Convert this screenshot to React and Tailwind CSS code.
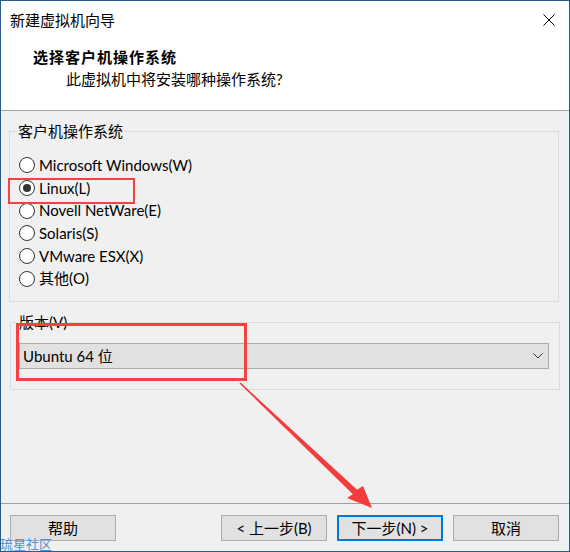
const FONT = { fontFamily: '"Lato", "Noto Sans CJK SC", sans-serif' }

const OPTIONS = [
  { label: 'Microsoft Windows(W)', checked: false },
  { label: 'Linux(L)', checked: true },
  { label: 'Novell NetWare(E)', checked: false },
  { label: 'Solaris(S)', checked: false },
  { label: 'VMware ESX(X)', checked: false },
  { label: '其他(O)', checked: false },
]

function Radio({ label, checked }) {
  return (
    <label className="ml-[3px] flex h-[22.7px] items-center gap-[4px] text-[15px] leading-none text-black">
      <span className="flex h-[16px] w-[16px] shrink-0 items-center justify-center rounded-full border border-[#333333] bg-white">
        {checked && <span className="h-[8px] w-[8px] rounded-full bg-[#333333]" />}
      </span>
      <span>{label}</span>
    </label>
  )
}

function Button({ children, primary }) {
  return (
    <button
      className={
        'flex h-[26px] w-[106px] items-center justify-center bg-[#e1e1e1] text-[15px] leading-none text-black ' +
        (primary ? 'border-2 border-[#0078d7]' : 'border border-[#adadad]')
      }
    >
      {children}
    </button>
  )
}

export default function App() {
  return (
    <div
      className="relative flex h-[552px] w-[570px] flex-col overflow-hidden border border-[#2c5b85] bg-[#f0f0f0]"
      style={FONT}
    >
      <header className="flex h-[110px] shrink-0 flex-col border-b border-[#a0a0a0] bg-white">
        <div className="flex h-[38px] items-center justify-between pl-[9px] pr-[14px]">
          <span className="text-[15px] leading-none text-black">新建虚拟机向导</span>
          <svg width="12" height="12" viewBox="0 0 12 12">
            <path d="M0.5 0.5 L11.5 11.5 M11.5 0.5 L0.5 11.5" stroke="#000" strokeWidth="1" fill="none" />
          </svg>
        </div>
        <div className="mt-[8px] pl-[32px] text-[15px] font-bold leading-[20px] tracking-[1px] text-black">
          选择客户机操作系统
        </div>
        <div className="mt-[2px] pl-[65px] text-[15px] leading-[20px] text-black">
          此虚拟机中将安装哪种操作系统?
        </div>
      </header>

      <main className="flex flex-1 flex-col pl-[8px] pt-[10px]">
        <fieldset className="w-[550px] border border-[#dcdcdc] pb-[11px] pl-[6px]">
          <legend className="px-[2px] text-[15px] leading-[20px] text-black">客户机操作系统</legend>
          <div className="mt-[13px] flex flex-col">
            {OPTIONS.map(o => (
              <Radio key={o.label} label={o.label} checked={o.checked} />
            ))}
          </div>
        </fieldset>

        <fieldset className="mt-[10px] ml-[1px] w-[550px] border border-[#dcdcdc] pb-[20px] pl-[6px]">
          <legend className="px-[2px] text-[15px] leading-[20px] text-black">版本(V)</legend>
          <div className="mt-[11px] ml-[2px] flex h-[26px] w-[530px] items-center justify-between border border-[#adadad] bg-[#e1e1e1] pl-[3px] pr-[5px]">
            <span className="text-[15px] leading-none text-black">Ubuntu 64 位</span>
            <svg width="10" height="6" viewBox="0 0 10 6">
              <path d="M0.5 0.5 L5 5 L9.5 0.5" stroke="#333" strokeWidth="1" fill="none" />
            </svg>
          </div>
        </fieldset>
      </main>

      <footer className="flex shrink-0 items-start justify-between border-t border-[#a0a0a0] pb-[10px] pl-[9px] pr-[10px] pt-[11px]">
        <Button>帮助</Button>
        <div className="flex gap-[10px]">
          <Button>&lt; 上一步(B)</Button>
          <Button primary>下一步(N) &gt;</Button>
          <Button>取消</Button>
        </div>
      </footer>

      {/* annotations drawn over the dialog */}
      <div className="pointer-events-none absolute left-[7px] top-[177px] h-[26px] w-[127px] border-2 border-[#f24242]" />
      <div className="pointer-events-none absolute left-[15px] top-[322px] h-[58px] w-[231px] border-[3px] border-[#f24242]" />
      <svg className="pointer-events-none absolute left-[-1px] top-[-1px]" width="570" height="552" viewBox="0 0 570 552">
        <polygon
          points="239.5,383.5 352.9,494.2 347,498 372,508 363,486 357.1,489.8 240.5,382.5"
          fill="#f53c3c"
        />
      </svg>
      <span className="pointer-events-none absolute bottom-0 left-[-1px] text-[13px] leading-[14px] text-[#4a8fd6]">
        琉星社区
      </span>
    </div>
  )
}
